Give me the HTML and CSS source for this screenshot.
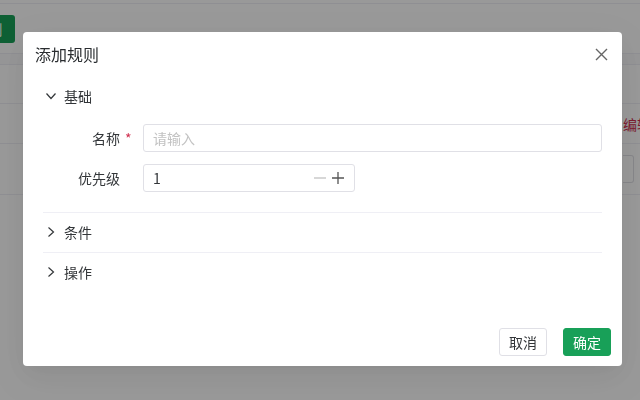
FILE: index.html
```html
<!DOCTYPE html>
<html lang="zh">
<head>
  <meta charset="UTF-8">
  <meta name="viewport" content="width=device-width, initial-scale=1.0">
  <title>规则</title>
  <link rel="stylesheet" href="styles.css">
</head>
<body>
  <!-- página de fundo -->
  <div class="page">
    <div class="topbar"></div>
    <div class="toolbar">
      <button class="btn-add">添加规则</button>
    </div>
    <div class="table">
      <div class="row thead"></div>
      <div class="row r1"></div>
      <div class="row r2"><span></span><span class="op">编辑</span></div>
      <div class="row r3"><span></span><span class="mini-input"></span></div>
    </div>
  </div>

  <div class="mask"></div>

  <!-- modal -->
  <div class="modal-wrap">
    <div class="dialog">
      <div class="dialog-header">
        <span class="dialog-title">添加规则</span>
        <span class="close">
          <svg width="13" height="13" viewBox="0 0 13 13"><path d="M1 1 L12 12 M12 1 L1 12" stroke="#666" stroke-width="1.4" fill="none"/></svg>
        </span>
      </div>

      <div class="dialog-body">
        <div class="collapse-item">
          <div class="collapse-header">
            <span class="arrow"><svg width="10" height="10" viewBox="0 0 10 10"><polyline points="0.5,2.5 5,7.5 9.5,2.5" stroke="#333639" stroke-width="1.2" fill="none"/></svg></span>
            <span>基础</span>
          </div>
          <div class="collapse-content">
            <div class="form-row">
              <label class="form-label"><span>名称</span><span class="req">*</span></label>
              <div class="input"><span class="placeholder">请输入</span></div>
            </div>
            <div class="form-row">
              <label class="form-label"><span>优先级</span><span class="req"></span></label>
              <div class="input number">
                <span class="value">1</span>
                <span class="num-btn minus"><svg width="12" height="12" viewBox="0 0 12 12"><path d="M0 6 H12" stroke="#c2c2c2" stroke-width="1.3"/></svg></span>
                <span class="num-btn plus"><svg width="12" height="12" viewBox="0 0 12 12"><path d="M0 6 H12 M6 0 V12" stroke="#555" stroke-width="1.3"/></svg></span>
              </div>
            </div>
          </div>
        </div>

        <div class="collapse-item bordered">
          <div class="collapse-header">
            <span class="arrow"><svg width="10" height="10" viewBox="0 0 10 10"><polyline points="2.5,0.5 7.5,5 2.5,9.5" stroke="#333639" stroke-width="1.2" fill="none"/></svg></span>
            <span>条件</span>
          </div>
        </div>

        <div class="collapse-item bordered">
          <div class="collapse-header">
            <span class="arrow"><svg width="10" height="10" viewBox="0 0 10 10"><polyline points="2.5,0.5 7.5,5 2.5,9.5" stroke="#333639" stroke-width="1.2" fill="none"/></svg></span>
            <span>操作</span>
          </div>
        </div>
      </div>

      <div class="dialog-footer">
        <button class="btn">取消</button>
        <button class="btn primary">确定</button>
      </div>
    </div>
  </div>
</body>
</html>
```

FILE: styles.css
```css
/* cores */
:root {
  --text: #333639;
  --border: #e0e0e6;
  --divider: #efeff5;
  --primary: #18a058;
  --error: #d03050;
}

body {
  margin: 0;
  font-family: "Noto Sans CJK SC", "Noto Sans", sans-serif;
  font-size: 14px;
  color: var(--text);
  background: #fff;
  overflow: hidden;
  height: 400px;
}

/* página por trás da máscara */
.topbar {
  height: 3px;
  border-bottom: 1px solid var(--divider);
}

.toolbar {
  padding-top: 11px;
  height: 28px;
}

.btn-add {
  margin-left: -66px;
  width: 81px;
  height: 28px;
  border: none;
  border-radius: 3px;
  background: var(--primary);
  color: #fff;
  font-family: inherit;
  font-size: 14px;
  padding: 0;
}

.table {
  margin-top: 10px;
  border-top: 1px solid var(--divider);
}

.row {
  display: grid;
  grid-template-columns: 623px 1fr;
  align-items: center;
  border-bottom: 1px solid var(--divider);
}

.thead {
  height: 10px;
  background: #fafafc;
}

.r1 { height: 38px; }
.r2 { height: 39px; }
.r3 { height: 50px; }

.op {
  color: var(--error);
  white-space: nowrap;
}

.mini-input {
  display: block;
  width: 10px;
  height: 26px;
  border: 1px solid var(--border);
  border-left: none;
  border-radius: 0 3px 3px 0;
}

.mask {
  position: fixed;
  inset: 0;
  background: rgba(0, 0, 0, 0.4);
}

/* modal */
.modal-wrap {
  position: fixed;
  inset: 0;
  display: flex;
  align-items: flex-start;
  padding: 32px 0 0 23px;
}

.dialog {
  width: 599px;
  height: 334px;
  background: #fff;
  border-radius: 4px;
  display: flex;
  flex-direction: column;
  box-shadow: 0 6px 16px -9px rgba(0, 0, 0, 0.08), 0 9px 28px 0 rgba(0, 0, 0, 0.05), 0 12px 48px 16px rgba(0, 0, 0, 0.03);
}

.dialog-header {
  display: flex;
  justify-content: space-between;
  align-items: center;
  height: 22px;
  padding: 11px 12px 12px 12px;
}

.dialog-title {
  font-size: 16px;
  line-height: 22px;
  color: #2a2d30;
}

.close {
  width: 20px;
  height: 20px;
  display: flex;
  align-items: center;
  justify-content: center;
  margin-right: -1px;
}

.dialog-body {
  padding: 0 20px;
}

.collapse-item.bordered {
  border-top: 1px solid var(--divider);
}

.collapse-header {
  display: flex;
  align-items: center;
  height: 24px;
  padding: 7px 0 8px;
  line-height: 24px;
}

.arrow {
  width: 16px;
  height: 10px;
  padding-left: 3px;
  margin-right: 2px;
  display: flex;
  align-items: center;
}

.collapse-content {
  padding: 8px 0 20px;
}

.form-row {
  display: flex;
  align-items: center;
  height: 28px;
  margin-bottom: 12px;
}

.form-row:last-child {
  margin-bottom: 0;
}

.form-label {
  width: 100px;
  display: flex;
  justify-content: flex-end;
  align-items: center;
}

.req {
  width: 18px;
  padding-left: 5px;
  color: var(--error);
}

.input {
  flex: 1;
  height: 26px;
  border: 1px solid var(--border);
  border-radius: 3px;
  display: flex;
  align-items: center;
  padding: 0 10px 0 9px;
}

.placeholder {
  color: #c2c2c2;
}

.input.number {
  flex: none;
  width: 191px;
}

.value {
  flex: 1;
}

.num-btn {
  display: flex;
  width: 12px;
  height: 12px;
}

.num-btn.minus {
  margin-right: 6px;
}

.dialog-footer {
  margin-top: auto;
  display: flex;
  justify-content: flex-end;
  gap: 16px;
  padding: 0 11px 10px;
}

.btn {
  width: 48px;
  height: 28px;
  padding: 0;
  border: 1px solid var(--border);
  border-radius: 3px;
  background: #fff;
  color: var(--text);
  font-family: inherit;
  font-size: 14px;
}

.btn.primary {
  border-color: var(--primary);
  background: var(--primary);
  color: #fff;
}
```
